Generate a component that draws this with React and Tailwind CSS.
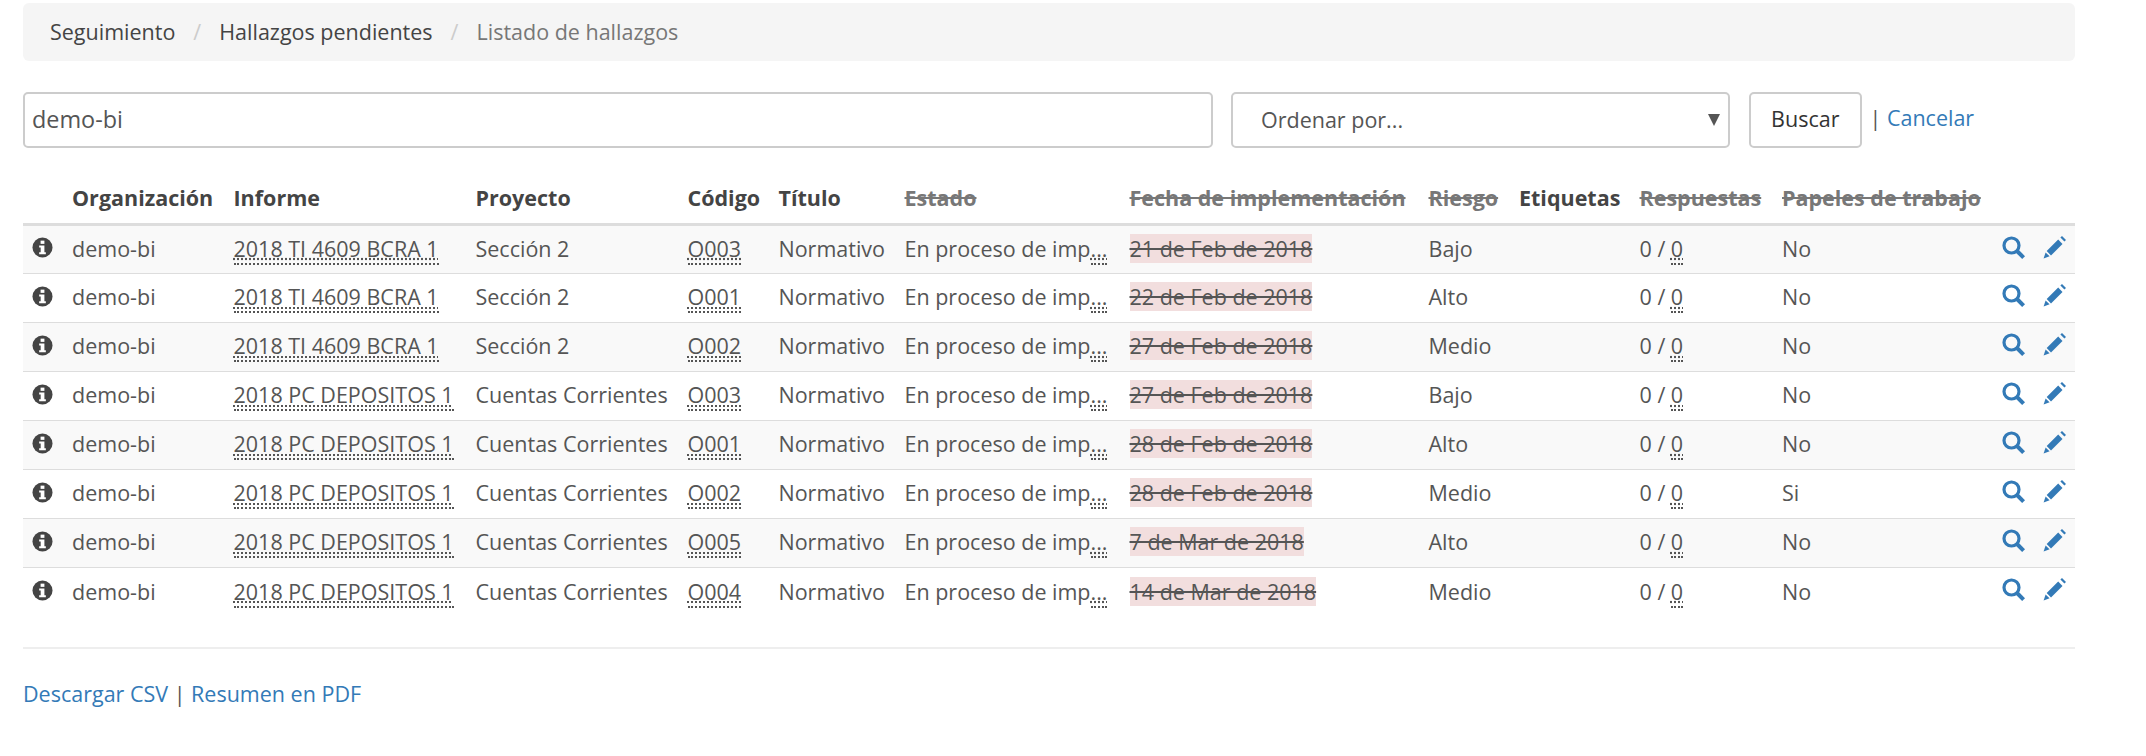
import React from 'react';

const FONT = { fontFamily: '"Open Sans", sans-serif' };

const rows = [
    ['2018 TI 4609 BCRA 1', 'Sección 2', 'O003', '21 de Feb de 2018', 'Bajo', 'No'],
    ['2018 TI 4609 BCRA 1', 'Sección 2', 'O001', '22 de Feb de 2018', 'Alto', 'No'],
    ['2018 TI 4609 BCRA 1', 'Sección 2', 'O002', '27 de Feb de 2018', 'Medio', 'No'],
    ['2018 PC DEPOSITOS 1', 'Cuentas Corrientes', 'O003', '27 de Feb de 2018', 'Bajo', 'No'],
    ['2018 PC DEPOSITOS 1', 'Cuentas Corrientes', 'O001', '28 de Feb de 2018', 'Alto', 'No'],
    ['2018 PC DEPOSITOS 1', 'Cuentas Corrientes', 'O002', '28 de Feb de 2018', 'Medio', 'Si'],
    ['2018 PC DEPOSITOS 1', 'Cuentas Corrientes', 'O005', '7 de Mar de 2018', 'Alto', 'No'],
    ['2018 PC DEPOSITOS 1', 'Cuentas Corrientes', 'O004', '14 de Mar de 2018', 'Medio', 'No'],
];

const columns = [
    { label: '', width: 'w-[41.5px]' },
    { label: 'Organización', width: 'w-[161.5px]' },
    { label: 'Informe', width: 'w-[242px]' },
    { label: 'Proyecto', width: 'w-[212px]' },
    { label: 'Código', width: 'w-[91px]' },
    { label: 'Título', width: 'w-[126px]' },
    { label: 'Estado', width: 'w-[225px]', off: true },
    { label: 'Fecha de implementación', width: 'w-[299px]', off: true },
    { label: 'Riesgo', width: 'w-[90.5px]', off: true },
    { label: 'Etiquetas', width: 'w-[120.5px]' },
    { label: 'Respuestas', width: 'w-[142.5px]', off: true },
    { label: 'Papeles de trabajo', width: 'w-[220.5px]', off: true },
    { label: '', width: 'w-[80px]' },
];

const InfoIcon = () => (
    <svg viewBox="0 0 22 22" className="mb-[3px] h-[21px] w-[21px] block">
        <circle cx="11" cy="11" r="10.5" fill="#444" />
        <rect x="9" y="3.8" width="4" height="3.4" fill="#fff" />
        <path d="M7.5 9h5.5v7h1.5v2h-7v-2h1.6v-5h-1.6z" fill="#fff" />
    </svg>
);

const SearchIcon = () => (
    <svg viewBox="0 0 23 23" className="h-[23px] w-[23px] block" fill="none" stroke="#337ab7">
        <circle cx="9.5" cy="9.5" r="7.5" strokeWidth="3.2" />
        <path d="M15 15l6.6 6.6" strokeWidth="4" />
    </svg>
);

const PencilIcon = () => (
    <svg viewBox="0 0 23 23" className="h-[23px] w-[23px] block" fill="#337ab7">
        <path d="M15.2 3.6l4.3 4.3L8 19.4l-4.3-4.3z" />
        <path d="M17.4 1.5l1.6-1.5 4 3.9-1.6 1.6z" />
        <path d="M2.6 16.4l4 3.9L.6 22.5z" />
    </svg>
);

const Abbr = ({ children }) => (
    <span className="underline decoration-dotted decoration-[#555] border-b-2 border-dotted border-[#555]">{children}</span>
);

const App = () => {
    return (
        <div style={FONT} className="h-[756px] bg-white pl-[23px] pr-[71px] pt-[3px] text-[21.5px] text-[#555]">
            {/* Breadcrumb */}
            <div className="flex h-[58px] items-center rounded-md bg-[#f5f5f5] pl-[27px]">
                <a className="text-[#444]">Seguimiento</a>
                <span className="px-[18px] text-[#ccc]">/</span>
                <a className="text-[#444]">Hallazgos pendientes</a>
                <span className="px-[18px] text-[#ccc]">/</span>
                <span className="text-[#777]">Listado de hallazgos</span>
            </div>

            {/* Search form */}
            <div className="mt-[31px] flex h-[56px] items-stretch">
                <input
                    type="text"
                    defaultValue="demo-bi"
                    style={FONT}
                    className="w-[1190px] rounded-[5px] border-2 border-[#ccc] pl-[7px] text-[23.4px] text-[#555] outline-none"
                />
                <div className="relative ml-[18px] w-[499px]">
                    <select
                        style={FONT}
                        className="h-full w-full appearance-none rounded-[5px] border-2 border-[#ccc] bg-white pl-[28px] text-[21.5px] text-[#555] outline-none"
                    >
                        <option>Ordenar por...</option>
                    </select>
                    <svg viewBox="0 0 12 12" className="absolute right-[10px] top-[22px] h-[12px] w-[12px]" fill="#555">
                        <path d="M0 0h12L6 12z" />
                    </svg>
                </div>
                <button style={FONT} className="ml-[18.5px] w-[113.5px] rounded-[5px] border-2 border-[#ccc] bg-white pb-[2px] text-[21.5px] text-[#333]">
                    Buscar
                </button>
                <div className="ml-[7.5px] self-center pb-[3px] text-[#337ab7]">
                    <span className="text-[#555]">|</span> <a>Cancelar</a>
                </div>
            </div>

            {/* Results */}
            <table className="mt-[30px] w-[2052px] table-fixed border-collapse">
                <colgroup>
                    {columns.map((col, i) => (
                        <col key={i} className={col.width} />
                    ))}
                </colgroup>
                <thead>
                    <tr className="h-[46px] border-b-[3px] border-[#ddd]">
                        {columns.map((col, i) => (
                            <th key={i} className={`px-[7.5px] pb-[4px] text-left font-bold whitespace-nowrap ${col.off ? 'text-[#777] line-through' : 'text-[#444]'}`}>
                                {col.label}
                            </th>
                        ))}
                    </tr>
                </thead>
                <tbody>
                    {rows.map((row, i) => (
                        <tr key={i} className={`h-[49px] border-b-[1.5px] border-[#ddd] last:border-b-0 ${i % 2 === 0 ? 'bg-[#f9f9f9]' : 'bg-white'}`}>
                            <td className="px-[9px]"><InfoIcon /></td>
                            <td className="px-[7.5px]">demo-bi</td>
                            <td className="px-[7.5px] whitespace-nowrap"><Abbr>{row[0]}</Abbr></td>
                            <td className="px-[7.5px] whitespace-nowrap">{row[1]}</td>
                            <td className="px-[7.5px]"><Abbr>{row[2]}</Abbr></td>
                            <td className="px-[7.5px]">Normativo</td>
                            <td className="px-[7.5px] whitespace-nowrap">En proceso de imp<Abbr>...</Abbr></td>
                            <td className="px-[7.5px] whitespace-nowrap">
                                <span className="bg-[#f2dede] line-through">{row[3]}</span>
                            </td>
                            <td className="px-[7.5px]">{row[4]}</td>
                            <td className="px-[7.5px]"></td>
                            <td className="px-[7.5px] whitespace-nowrap">0 / <Abbr>0</Abbr></td>
                            <td className="px-[7.5px]">{row[5]}</td>
                            <td className="px-[7px]">
                                <div className="mb-[4px] flex gap-[18px]">
                                    <SearchIcon />
                                    <PencilIcon />
                                </div>
                            </td>
                        </tr>
                    ))}
                </tbody>
            </table>

            <hr className="mt-[31px] border-t-2 border-[#eee]" />

            <div className="mt-[29px] text-[#337ab7]">
                <a>Descargar CSV</a> <span className="text-[#555]">|</span> <a>Resumen en PDF</a>
            </div>
        </div>
    );
};

export default App;
